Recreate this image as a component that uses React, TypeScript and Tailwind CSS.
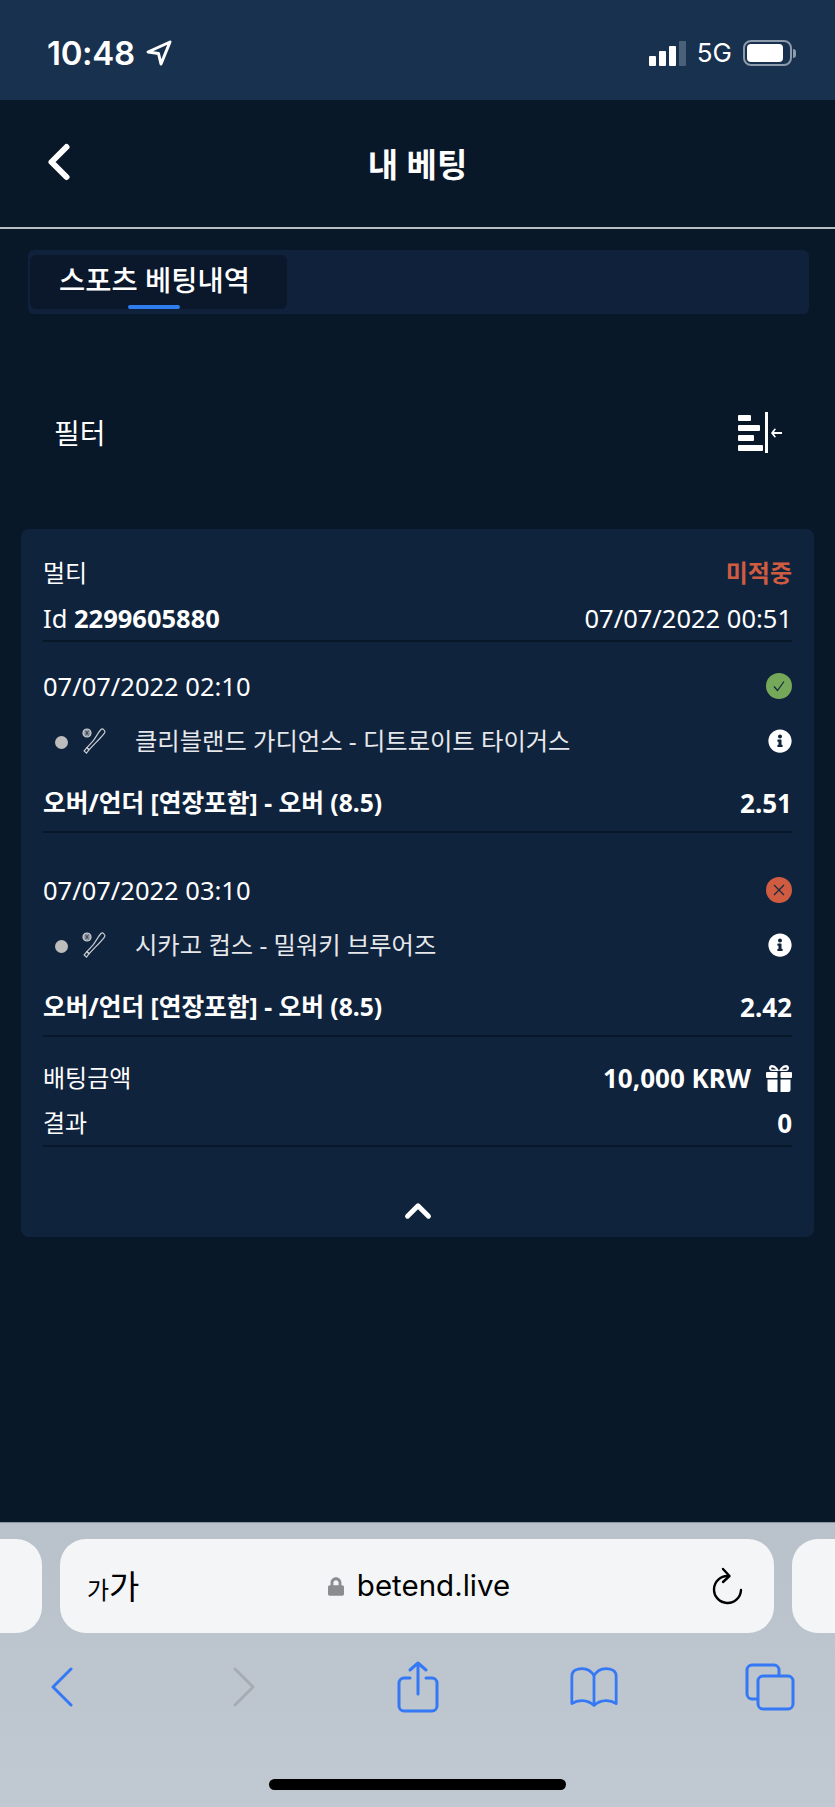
import { ChevronLeft, ChevronUp } from 'lucide-react'
import { FaInfoCircle, FaLock } from 'react-icons/fa'

const legs = [
  {
    date: '07/07/2022 02:10',
    match: '클리블랜드 가디언스 - 디트로이트 타이거스',
    odds: '2.51',
    won: true,
    top: 'pt-[26px]',
  },
  {
    date: '07/07/2022 03:10',
    match: '시카고 컵스 - 밀워키 브루어즈',
    odds: '2.42',
    won: false,
    top: 'pt-[39px]',
  },
]

function BatIcon() {
  return (
    <svg width="28" height="30" viewBox="0 0 28 30" fill="none" stroke="#c9ccd1" strokeWidth="1.2">
      <circle cx="6" cy="7" r="4" fill="#9a9fa6" />
      <path d="M4.6 4.6c1 1.4 1 3.4 0 4.8M7.4 4.6c-1 1.4-1 3.4 0 4.8" stroke="#10233d" strokeWidth="0.8" />
      <path d="M20 3.5c1.6-1.6 5 1.4 3.6 3.4-2 2.8-6 7-9.5 10.5l-6 6.3-2.2-2 6-6.5C15 11 17.5 6 20 3.5z" />
      <path d="M5.9 21.7l2.2 2-2.6 3.5-2.4-2.2z" />
    </svg>
  )
}

function FilterIcon() {
  return (
    <svg width="46" height="42" viewBox="0 0 46 42" fill="white">
      <rect x="0" y="3" width="13" height="6" rx="1" />
      <rect x="0" y="13" width="22" height="6" rx="1" />
      <rect x="0" y="23" width="16" height="6" rx="1" />
      <rect x="0" y="33" width="25" height="6" rx="1" />
      <rect x="27" y="0" width="3" height="41" />
      <path d="M36 20h8v2h-8l2 3-1.5.4L33 21l3.5-4.4 1.5.4z" />
    </svg>
  )
}

function GiftIcon() {
  return (
    <svg width="26" height="28" viewBox="0 0 26 28" fill="white">
      <path d="M6 1c3 0 6 3 7 6 1-3 4-6 7-6 2 0 3 1.500 3 3s-1 3-3 3h-14C4 7 3 5.500 3 4s1-3 3-3zm.500 2.500c-1 0-1.300 .6-1.300 1s.5 1 1.300 1h3.500c-.8-1-2.300-2-3.500-2zm13 0c-1.200 0-2.700 1-3.500 2h3.500c.8 0 1.300-.6 1.300-1s-.3-1-1.300-1z" />
      <rect x="0" y="8" width="11.500" height="6" rx="1" />
      <rect x="14.500" y="8" width="11.500" height="6" rx="1" />
      <path d="M1.500 15.500h10V28H4a2.500 2.500 0 0 1-2.500-2.500zM14.500 15.500h10v10A2.500 2.500 0 0 1 22 28h-7.500z" />
    </svg>
  )
}

function StatusBadge({ won }: { won: boolean }) {
  return (
    <span
      className={`flex h-[26px] w-[26px] items-center justify-center rounded-full ${won ? 'bg-[#75a858]' : 'bg-[#cf5c40]'}`}
    >
      <svg width="14" height="14" viewBox="0 0 14 14" fill="none" stroke="#14283f" strokeWidth="1.2">
        {won ? <path d="M2 7.5l3.5 4L12 2.5" /> : <path d="M2 2l10 10M12 2L2 12" />}
      </svg>
    </span>
  )
}

function StatusBar() {
  return (
    <div className="flex h-[100px] items-center justify-between bg-[#17314e] pl-[47px] pr-[39px] pt-[6px] font-['Inter',sans-serif] text-white">
      <div className="flex items-center gap-[10px]">
        <span className="text-[33px] font-semibold leading-none tracking-[-0.3px]">10:48</span>
        <svg width="28" height="28" viewBox="0 0 28 28" fill="none" stroke="white" strokeWidth="3" strokeLinejoin="round">
          <path d="M25 3L3 13l10.500 1.500L16 25z" />
        </svg>
      </div>
      <div className="flex items-center">
        <div className="flex items-end gap-[3px]">
          <span className="h-[10px] w-[7px] rounded-[1px] bg-white" />
          <span className="h-[15px] w-[7px] rounded-[1px] bg-white" />
          <span className="h-[20px] w-[7px] rounded-[1px] bg-white" />
          <span className="h-[25px] w-[7px] rounded-[1px] bg-[#4b6178]" />
        </div>
        <span className="ml-[11px] text-[26px] leading-none">5G</span>
        <div className="ml-[11px] flex items-center">
          <div className="flex h-[26px] w-[49px] items-center rounded-[8px] border-2 border-[#8c9aaa] p-[2px]">
            <div className="h-full w-[36px] rounded-[4px] bg-white" />
          </div>
          <div className="ml-[1px] h-[9px] w-[3px] rounded-r-full bg-[#8c9aaa]" />
        </div>
      </div>
    </div>
  )
}

function Safari() {
  return (
    <div className="mt-auto h-[285px] border-t border-[#8b95a0] bg-gradient-to-b from-[#b9c2cb] to-[#c0c8d1]">
      <div className="flex gap-[18px] pb-[16px] pt-[16px]">
        <div className="h-[94px] w-[42px] rounded-r-[26px] bg-[#f3f5f7]" />
        <div className="flex h-[94px] w-[714px] items-center justify-between rounded-[26px] bg-[#f3f5f7] pl-[27px] pr-[30px] text-black">
          <span className="flex w-[97px] items-baseline leading-none">
            <span className="text-[24px]">가</span>
            <span className="text-[33px]">가</span>
          </span>
          <div className="flex items-center gap-[13px]">
            <FaLock className="h-[21px] w-[16px] text-[#8b8b90]" />
            <span className="font-['Inter',sans-serif] text-[29.5px] leading-none">betend.live</span>
          </div>
          <div className="flex w-[90px] justify-end">
            <svg width="34" height="38" viewBox="0 0 34 38" fill="none" stroke="black" strokeWidth="2.400" strokeLinecap="round" strokeLinejoin="round">
              <path d="M18 9A13.500 13.500 0 1 0 31 23" />
              <path d="M13 2l6.500 7-6.500 6" />
            </svg>
          </div>
        </div>
        <div className="h-[94px] w-[43px] rounded-l-[26px] bg-[#f3f5f7]" />
      </div>
      <div className="flex h-[76px] items-center justify-between pl-[37px] pr-[40px]">
        <div className="flex w-[50px] justify-center">
          <svg width="24" height="40" viewBox="0 0 24 40" fill="none" stroke="#3478f6" strokeWidth="3" strokeLinecap="round" strokeLinejoin="round">
            <path d="M21 2L3 20l18 18" />
          </svg>
        </div>
        <div className="flex w-[50px] justify-center pl-[10px]">
          <svg width="24" height="40" viewBox="0 0 24 40" fill="none" stroke="#a7acb2" strokeWidth="3" strokeLinecap="round" strokeLinejoin="round">
            <path d="M3 2l18 18L3 38" />
          </svg>
        </div>
        <div className="flex w-[50px] justify-center pl-[4px]">
          <svg width="42" height="52" viewBox="0 0 42 52" fill="none" stroke="#3478f6" strokeWidth="3" strokeLinecap="round" strokeLinejoin="round">
            <path d="M13 17H7a5 5 0 0 0-5 5v23a5 5 0 0 0 5 5h28a5 5 0 0 0 5-5V22a5 5 0 0 0-5-5h-6" />
            <path d="M21 33V2M13 9l8-7 8 7" />
          </svg>
        </div>
        <div className="flex w-[50px] justify-center pl-[2px]">
          <svg width="52" height="44" viewBox="0 0 52 44" fill="none" stroke="#3478f6" strokeWidth="3" strokeLinecap="round" strokeLinejoin="round">
            <path d="M26 10C23 4 18 2 13 2 8 2 2 4 2 10v30c6-4 16-5 24 2 8-7 18-6 24-2V10c0-6-6-8-11-8-5 0-10 2-13 8zM26 10v32" />
          </svg>
        </div>
        <div className="flex w-[50px] justify-center">
          <svg width="50" height="48" viewBox="0 0 50 48" fill="none" stroke="#3478f6" strokeWidth="3" strokeLinejoin="round">
            <path d="M13 36H7a5 5 0 0 1-5-5V7a5 5 0 0 1 5-5h22a5 5 0 0 1 5 5v6" />
            <rect x="13" y="13" width="35" height="33" rx="5" />
          </svg>
        </div>
      </div>
      <div className="flex justify-center pt-[54px]">
        <div className="h-[11px] w-[297px] rounded-full bg-black" />
      </div>
    </div>
  )
}

export default function App() {
  return (
    <div className="flex h-[1807px] w-[835px] flex-col overflow-hidden bg-[#091829] font-['Noto_Sans','Noto_Sans_CJK_KR',sans-serif] text-[24px] text-white">
      <StatusBar />

      {/* Header */}
      <div className="relative flex h-[129px] items-center justify-center border-b-2 border-[#b9bcc0] bg-[#091829] pt-[2px]">
        <ChevronLeft className="absolute left-[29px] top-[32px] h-[60px] w-[60px]" strokeWidth={2.4} />
        <h1 className="text-[33px] font-semibold leading-none">내 베팅</h1>
      </div>

      {/* Tabs */}
      <div className="ml-[28px] mr-[26px] mt-[21px] h-[64px] rounded-[6px] bg-[#10223b] p-[5px] pl-[2px]">
        <div className="relative flex h-full w-[257px] items-center justify-center rounded-[6px] bg-[#0b172a] pb-[4px] pr-[8px] text-[28.500px] font-medium">
          스포츠 베팅내역
          <span className="absolute bottom-0 left-[98px] h-[4px] w-[52px] rounded-full bg-[#2f7ced]" />
        </div>
      </div>

      {/* Filter */}
      <div className="flex h-[215px] items-center justify-between pl-[54px] pr-[51px] pt-[22px]">
        <span className="text-[28px]">필터</span>
        <FilterIcon />
      </div>

      {/* Bet card */}
      <div className="mx-[21px] h-[708px] rounded-[8px] bg-[#10233d] px-[22px] pt-[26px]">
        <div className="border-b-2 border-[#091829] pb-[4px]">
          <div className="flex h-[36px] items-center justify-between">
            <span>멀티</span>
            <span className="font-semibold text-[#cf5c40]">미적중</span>
          </div>
          <div className="mt-[9px] flex h-[36px] items-center justify-between text-[25.500px]">
            <span>
              Id <b className="font-bold">2299605880</b>
            </span>
            <span>07/07/2022 00:51</span>
          </div>
        </div>

        {legs.map((leg) => (
          <div key={leg.date} className={`border-b-2 border-[#091829] pb-[10px] ${leg.top}`}>
            <div className="flex h-[36px] items-center justify-between">
              <span className="text-[25.500px]">{leg.date}</span>
              <StatusBadge won={leg.won} />
            </div>
            <div className="mt-[19px] flex h-[36px] items-center">
              <span className="ml-[12px] mt-[3px] h-[13px] w-[13px] rounded-full bg-[#bdbdbd]" />
              <span className="ml-[13px]">
                <BatIcon />
              </span>
              <span className="ml-[26px] text-[24.300px] text-[#e6e8eb]">{leg.match}</span>
              <FaInfoCircle className="ml-auto h-[24px] w-[24px]" />
            </div>
            <div className="mt-[26px] flex h-[36px] items-center justify-between font-bold">
              <span className="text-[24.700px]">오버/언더 [연장포함] - 오버 (8.5)</span>
              <span className="text-[26px]">{leg.odds}</span>
            </div>
          </div>
        ))}

        <div className="border-b-2 border-[#091829] pb-[4px] pt-[23px]">
          <div className="flex h-[36px] items-center justify-between">
            <span>배팅금액</span>
            <span className="flex items-center gap-[15px] text-[26px] font-bold">
              10,000 KRW
              <GiftIcon />
            </span>
          </div>
          <div className="mt-[9px] flex h-[36px] items-center justify-between">
            <span>결과</span>
            <span className="text-[26px] font-bold">0</span>
          </div>
        </div>

        <div className="mt-[43px] flex justify-center">
          <ChevronUp className="h-[42px] w-[42px]" strokeWidth={2.8} />
        </div>
      </div>

      <Safari />
    </div>
  )
}
